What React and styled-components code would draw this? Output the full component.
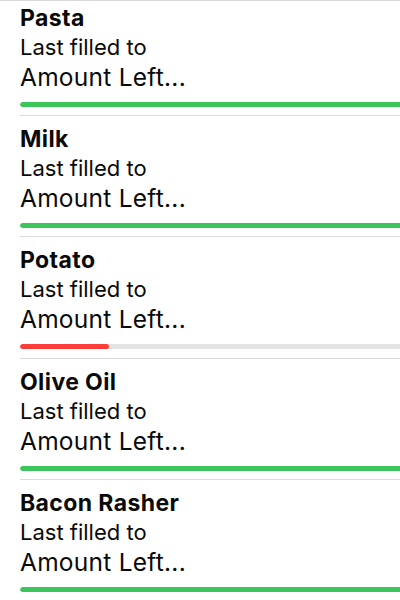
import styled, { createGlobalStyle } from "styled-components";

const GlobalStyle = createGlobalStyle`
  html, body {
    margin: 0;
    padding: 0;
    background: #fff;
  }
  body {
    font-family: Inter, "Liberation Sans", sans-serif;
    color: #0a0a0a;
    overflow: hidden;
  }
`;

const items = [
  { name: "Pasta", level: 1, color: "#3cc55b" },
  { name: "Milk", level: 1, color: "#3cc55b" },
  { name: "Potato", level: 0.229, color: "#fc3d39" },
  { name: "Olive Oil", level: 1, color: "#3cc55b" },
  { name: "Bacon Rasher", level: 1, color: "#3cc55b" },
];

const App = () => {
  return (
    <>
      <GlobalStyle />
      <Screen>
        <TopRule />
        <List>
          {items.map((item) => (
            <Row key={item.name}>
              <Title>{item.name}</Title>
              <Subtitle>Last filled to</Subtitle>
              <Amount>Amount Left...</Amount>
              <Track $empty={item.level < 1}>
                <Fill $color={item.color} style={{ width: `${item.level * 100}%` }} />
              </Track>
            </Row>
          ))}
        </List>
      </Screen>
    </>
  );
};

const Screen = styled.div`
  width: 400px;
  height: 600px;
  overflow: hidden;
  position: relative;
`;

const TopRule = styled.div`
  height: 1px;
  background: #d9d9d9;
  position: relative;
  z-index: 1;
`;

const List = styled.div`
  margin-top: -6.3px;
  display: flex;
  flex-direction: column;
`;

const Row = styled.div`
  margin-left: 20px;
  padding: 10px 0 8.3px;
  border-bottom: 1px solid #dcdcdc;
  display: flex;
  flex-direction: column;
`;

const Title = styled.div`
  font-size: 23px;
  font-weight: 700;
  line-height: 27px;
  letter-spacing: 0.4px;
`;

const Subtitle = styled.div`
  font-size: 22px;
  line-height: 30px;
`;

const Amount = styled.div`
  font-size: 24.5px;
  line-height: 30px;
  letter-spacing: 0.25px;
`;

const Track = styled.div`
  margin-top: 10px;
  height: 5px;
  width: calc(100% + 10px);
  border-radius: 3px;
  background: ${({ $empty }) => ($empty ? "#e4e4e4" : "transparent")};
  overflow: hidden;
`;

const Fill = styled.div`
  height: 100%;
  border-radius: 3px;
  background: ${({ $color }) => $color};
`;

export default App;
